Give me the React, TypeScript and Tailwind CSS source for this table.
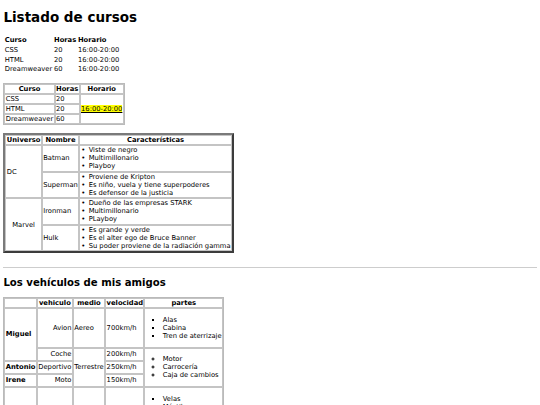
const cell = 'border border-[#c4c4c4] px-[0.42px] py-0';
const heroCell = 'border border-[#c4c4c4] px-[0.42px] py-[0.25px]';

const heroes = [
  {
    universe: 'DC',
    align: 'text-left',
    people: [
      { name: 'Batman', traits: ['Viste de negro', 'Multimillonario', 'Playboy'] },
      {
        name: 'Superman',
        traits: ['Proviene de Kripton', 'Es niño, vuela y tiene superpoderes', 'Es defensor de la justicia'],
      },
    ],
  },
  {
    universe: 'Marvel',
    align: 'text-center',
    people: [
      { name: 'Ironman', traits: ['Dueño de las empresas STARK', 'Multimillonario', 'PLayboy'] },
      {
        name: 'Hulk',
        traits: ['Es grande y verde', 'Es el alter ego de Bruce Banner', 'Su poder proviene de la radiación gamma'],
      },
    ],
  },
];

export default function App() {
  return (
    <div className="h-[405px] overflow-hidden bg-white px-[3.4px] text-[6.75px] leading-[8px] text-black font-['DejaVu_Sans',Verdana,sans-serif]">
      <h1 className="mt-[9.2px] mb-[9.4px] text-[13.5px] font-bold leading-[16.4px]">Listado de cursos</h1>

      {/* tabla sin bordes */}
      <table className="border-separate border-spacing-[1px] [&_td]:px-[0.4px] [&_td]:py-[0.34px] [&_th]:px-[0.4px] [&_th]:py-[0.34px]">
        <thead>
          <tr className="text-left">
            <th>Curso</th>
            <th>Horas</th>
            <th>Horario</th>
          </tr>
        </thead>
        <tbody>
          <tr>
            <td>CSS</td>
            <td>20</td>
            <td>16:00-20:00</td>
          </tr>
          <tr>
            <td>HTML</td>
            <td>20</td>
            <td>16:00-20:00</td>
          </tr>
          <tr>
            <td>Dreamweaver</td>
            <td>60</td>
            <td>16:00-20:00</td>
          </tr>
        </tbody>
      </table>

      {/* tabla con borde y rowspan */}
      <table className="mt-[8.3px] border-separate border-spacing-0 border border-[#bababa]">
        <thead>
          <tr>
            <th className={`${cell} text-center`}>Curso</th>
            <th className={`${cell} text-center`}>Horas</th>
            <th className={`${cell} text-center`}>Horario</th>
          </tr>
        </thead>
        <tbody>
          <tr>
            <td className={cell}>CSS</td>
            <td className={cell}>20</td>
            <td rowSpan={3} className={cell}>
              <span className="bg-[#ffff00] underline">16:00-20:00</span>
            </td>
          </tr>
          <tr>
            <td className={cell}>HTML</td>
            <td className={cell}>20</td>
          </tr>
          <tr>
            <td className={cell}>Dreamweaver</td>
            <td className={cell}>60</td>
          </tr>
        </tbody>
      </table>

      {/* superheroes */}
      <table className="mt-[7.7px] border-separate border-spacing-0 border-2 border-t-[#7a7a7a] border-l-[#7a7a7a] border-r-[#3c3c3c] border-b-[#3c3c3c]">
        <thead>
          <tr>
            <th className={`${heroCell} text-center`}>Universo</th>
            <th className={`${heroCell} text-center`}>Nombre</th>
            <th className={`${heroCell} text-center`}>Características</th>
          </tr>
        </thead>
        <tbody>
          {heroes.map((u) =>
            u.people.map((p, i) => (
              <tr key={p.name}>
                {i === 0 && (
                  <td rowSpan={u.people.length} className={`${heroCell} ${u.align}`}>
                    {u.universe}
                  </td>
                )}
                <td className={heroCell}>{p.name}</td>
                <td className={heroCell}>
                  <ul>
                    {p.traits.map((t) => (
                      <li key={t} className="flex">
                        <span className="w-[8px] shrink-0 pl-[0.5px]">•</span>
                        <span>{t}</span>
                      </li>
                    ))}
                  </ul>
                </td>
              </tr>
            ))
          )}
        </tbody>
      </table>

      <hr className="mt-[14px] border-t border-[#cdcdcd]" />

      <h2 className="mt-[8.8px] mb-[7.9px] text-[10.125px] font-bold leading-[12.3px]">Los vehículos de mis amigos</h2>

      <table className="border-separate border-spacing-0 border border-[#bababa]">
        <thead>
          <tr>
            <th className={cell}></th>
            <th className={`${cell} text-center`}>vehiculo</th>
            <th className={`${cell} text-center`}>medio</th>
            <th className={`${cell} text-center`}>velocidad</th>
            <th className={`${cell} text-center`}>partes</th>
          </tr>
        </thead>
        <tbody>
          <tr>
            <th rowSpan={2} className={`${cell} text-left`}>
              Miguel
            </th>
            <td className={`${cell} text-right`}>Avion</td>
            <td className={cell}>Aereo</td>
            <td className={cell}>700km/h</td>
            <td className={cell}>
              <ul className="my-[6.75px] list-[square] pl-[16.9px]">
                <li>Alas</li>
                <li>Cabina</li>
                <li>Tren de aterrizaje</li>
              </ul>
            </td>
          </tr>
          <tr>
            <td className={`${cell} text-right`}>Coche</td>
            <td rowSpan={3} className={cell}>
              Terrestre
            </td>
            <td className={cell}>200km/h</td>
            <td rowSpan={3} className={cell}>
              <ul className="my-[6.75px] list-[circle] pl-[16.9px]">
                <li>Motor</li>
                <li>Carrocería</li>
                <li>Caja de cambios</li>
              </ul>
            </td>
          </tr>
          <tr>
            <th className={`${cell} text-left`}>Antonio</th>
            <td className={`${cell} text-right`}>Deportivo</td>
            <td className={cell}>250km/h</td>
          </tr>
          <tr>
            <th className={`${cell} text-left`}>Irene</th>
            <td className={`${cell} text-right`}>Moto</td>
            <td className={cell}>150km/h</td>
          </tr>
          <tr>
            <th className={`${cell} text-left`}>Lucía</th>
            <td className={`${cell} text-right`}>Barco</td>
            <td className={cell}>Acuatico</td>
            <td className={cell}>40km/h</td>
            <td className={cell}>
              <ul className="my-[6.75px] list-[square] pl-[16.9px]">
                <li>Velas</li>
                <li>Mástil</li>
                <li>Timón</li>
                <li>Quilla</li>
                <li>Casco</li>
              </ul>
            </td>
          </tr>
        </tbody>
      </table>
    </div>
  );
}
